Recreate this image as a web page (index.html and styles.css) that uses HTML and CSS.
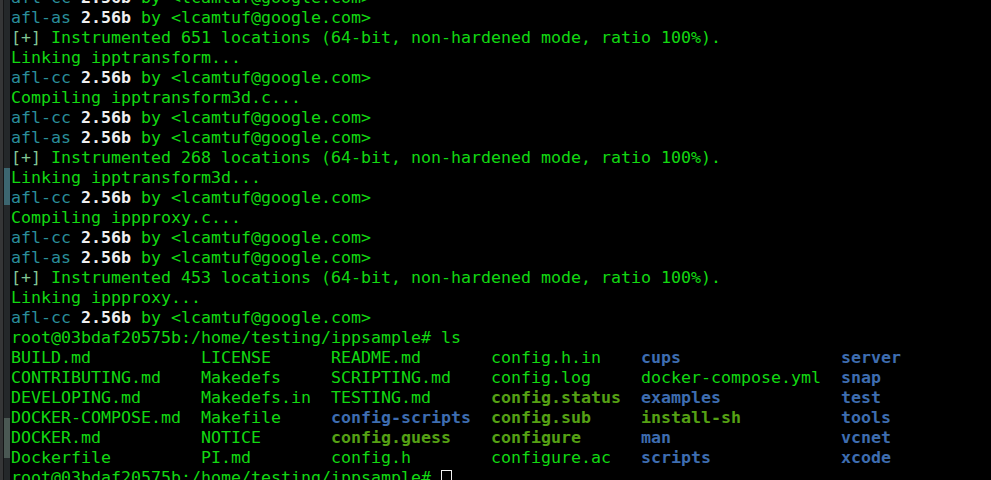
FILE: index.html
```html
<!DOCTYPE html>
<html>
<head>
<meta charset="utf-8">
<link rel="stylesheet" href="styles.css">
</head>
<body>
<div class="window">
  <div class="edge">
    <div class="edge-outer"></div>
    <div class="edge-line"></div>
    <div class="edge-inner">
      <div class="seg seg-a"></div>
      <div class="seg seg-teal"></div>
      <div class="seg seg-b"></div>
      <div class="seg seg-gray"></div>
      <div class="seg seg-c"></div>
    </div>
  </div>
  <div class="term">
    <div class="line"><span class="tool">afl-cc</span> <b class="ver">2.56b</b> by &lt;lcamtuf@google.com&gt;</div>
    <div class="line"><span class="tool">afl-as</span> <b class="ver">2.56b</b> by &lt;lcamtuf@google.com&gt;</div>
    <div class="line"><b class="ok">[+]</b> Instrumented 651 locations (64-bit, non-hardened mode, ratio 100%).</div>
    <div class="line">Linking ipptransform...</div>
    <div class="line"><span class="tool">afl-cc</span> <b class="ver">2.56b</b> by &lt;lcamtuf@google.com&gt;</div>
    <div class="line">Compiling ipptransform3d.c...</div>
    <div class="line"><span class="tool">afl-cc</span> <b class="ver">2.56b</b> by &lt;lcamtuf@google.com&gt;</div>
    <div class="line"><span class="tool">afl-as</span> <b class="ver">2.56b</b> by &lt;lcamtuf@google.com&gt;</div>
    <div class="line"><b class="ok">[+]</b> Instrumented 268 locations (64-bit, non-hardened mode, ratio 100%).</div>
    <div class="line">Linking ipptransform3d...</div>
    <div class="line"><span class="tool">afl-cc</span> <b class="ver">2.56b</b> by &lt;lcamtuf@google.com&gt;</div>
    <div class="line">Compiling ippproxy.c...</div>
    <div class="line"><span class="tool">afl-cc</span> <b class="ver">2.56b</b> by &lt;lcamtuf@google.com&gt;</div>
    <div class="line"><span class="tool">afl-as</span> <b class="ver">2.56b</b> by &lt;lcamtuf@google.com&gt;</div>
    <div class="line"><b class="ok">[+]</b> Instrumented 453 locations (64-bit, non-hardened mode, ratio 100%).</div>
    <div class="line">Linking ippproxy...</div>
    <div class="line"><span class="tool">afl-cc</span> <b class="ver">2.56b</b> by &lt;lcamtuf@google.com&gt;</div>
    <div class="line">root@03bdaf20575b:/home/testing/ippsample# ls</div>
    <div class="ls">
      <span>BUILD.md</span><span>LICENSE</span><span>README.md</span><span>config.h.in</span><b class="dir">cups</b><b class="dir">server</b>
      <span>CONTRIBUTING.md</span><span>Makedefs</span><span>SCRIPTING.md</span><span>config.log</span><span>docker-compose.yml</span><b class="dir">snap</b>
      <span>DEVELOPING.md</span><span>Makedefs.in</span><span>TESTING.md</span><b class="exe">config.status</b><b class="dir">examples</b><b class="dir">test</b>
      <span>DOCKER-COMPOSE.md</span><span>Makefile</span><b class="dir">config-scripts</b><b class="exe">config.sub</b><b class="exe">install-sh</b><b class="dir">tools</b>
      <span>DOCKER.md</span><span>NOTICE</span><b class="exe">config.guess</b><b class="exe">configure</b><b class="dir">man</b><b class="dir">vcnet</b>
      <span>Dockerfile</span><span>PI.md</span><span>config.h</span><span>configure.ac</span><b class="dir">scripts</b><b class="dir">xcode</b>
    </div>
    <div class="line">root@03bdaf20575b:/home/testing/ippsample# <span class="cursor"></span></div>
  </div>
</div>
</body>
</html>
```

FILE: styles.css
```css
html, body {
  margin: 0;
  padding: 0;
  background: #000;
  height: 100%;
  overflow: hidden;
}

.window {
  display: flex;
  height: 480px;
  background: #000;
  overflow: hidden;
}

.edge {
  display: flex;
  width: 10px;
  flex: 0 0 10px;
  height: 480px;
}

.edge-outer {
  width: 3px;
  background: #353637;
}

.edge-line {
  width: 1px;
  background: #141516;
}

.edge-inner {
  width: 6px;
  display: flex;
  flex-direction: column;
}

.seg { background: #24282a; }
.seg-a { height: 168px; }
.seg-teal { height: 37px; background: #3c6670; }
.seg-b { height: 213px; }
.seg-gray { height: 40px; background: #4a5853; }
.seg-c { flex: 1; }

.term {
  flex: 1;
  margin-top: -12px;
  padding-left: 1px;
  font-family: "DejaVu Sans Mono", monospace;
  font-size: 16.61px;
  line-height: 20px;
  color: #12d812;
}

.line {
  height: 20px;
  white-space: pre;
}

b { font-weight: bold; }

.tool { color: #2a8e9a; }
.ver { color: #efefef; }
.ok { color: #80c496; font-weight: normal; }

.ls {
  display: grid;
  grid-template-columns: 190px 130px 160px 150px 200px auto;
  grid-auto-rows: 20px;
  white-space: nowrap;
}

.dir { color: #3e6db0; }
.exe { color: #55a114; }

.cursor {
  display: inline-block;
  width: 11px;
  height: 18px;
  box-sizing: border-box;
  border: 1px solid #f2f2f2;
  vertical-align: top;
  margin-top: 2px;
}
```
